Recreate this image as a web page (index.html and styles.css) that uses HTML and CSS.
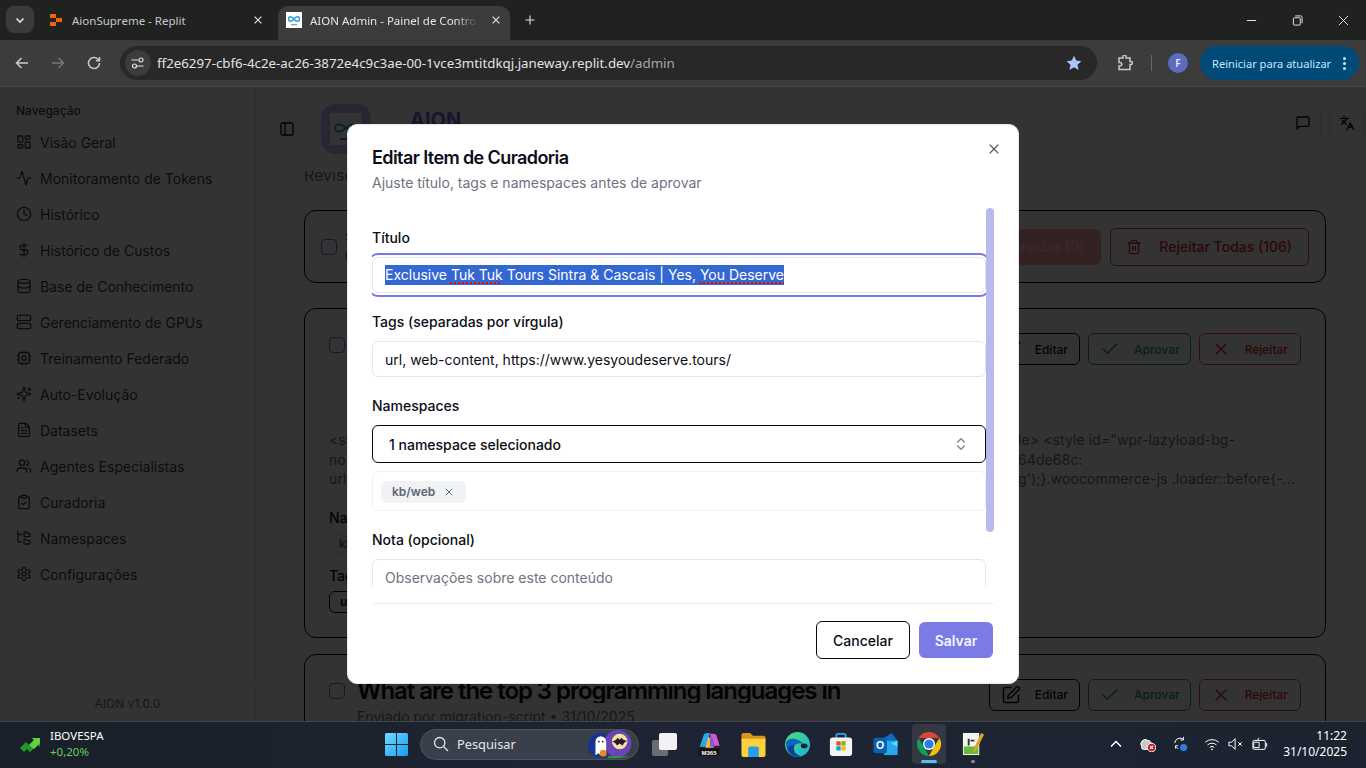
FILE: index.html
```html
<!DOCTYPE html>
<html lang="pt-BR">
<head>
<meta charset="utf-8">
<title>AION Admin - Painel de Controle</title>
<link rel="stylesheet" href="styles.css">
</head>
<body>
<svg class="sprite" xmlns="http://www.w3.org/2000/svg">
  <symbol id="i-dash" viewBox="0 0 24 24"><rect x="3" y="3" width="7" height="9" rx="1"/><rect x="14" y="3" width="7" height="5" rx="1"/><rect x="14" y="12" width="7" height="9" rx="1"/><rect x="3" y="16" width="7" height="5" rx="1"/></symbol>
  <symbol id="i-activity" viewBox="0 0 24 24"><path d="M22 12h-2.48a2 2 0 0 0-1.93 1.46l-2.35 8.36a.25.25 0 0 1-.48 0L9.24 2.18a.25.25 0 0 0-.48 0l-2.35 8.36A2 2 0 0 1 4.49 12H2"/></symbol>
  <symbol id="i-clock" viewBox="0 0 24 24"><circle cx="12" cy="12" r="10"/><path d="M12 6v6l4 2"/></symbol>
  <symbol id="i-dollar" viewBox="0 0 24 24"><path d="M12 2v20"/><path d="M17 5H9.5a3.5 3.5 0 0 0 0 7h5a3.5 3.5 0 0 1 0 7H6"/></symbol>
  <symbol id="i-db" viewBox="0 0 24 24"><ellipse cx="12" cy="5" rx="9" ry="3"/><path d="M3 5V19A9 3 0 0 0 21 19V5"/><path d="M3 12A9 3 0 0 0 21 12"/></symbol>
  <symbol id="i-server" viewBox="0 0 24 24"><rect x="2" y="2" width="20" height="8" rx="2"/><rect x="2" y="14" width="20" height="8" rx="2"/><path d="M6 6h.01"/><path d="M6 18h.01"/></symbol>
  <symbol id="i-cpu" viewBox="0 0 24 24"><rect x="4" y="4" width="16" height="16" rx="2"/><rect x="9" y="9" width="6" height="6" rx="1"/><path d="M15 2v2M15 20v2M2 15h2M2 9h2M20 15h2M20 9h2M9 2v2M9 20v2"/></symbol>
  <symbol id="i-spark" viewBox="0 0 24 24"><path d="M9.937 15.5A2 2 0 0 0 8.5 14.063l-6.135-1.582a.5.5 0 0 1 0-.962L8.5 9.936A2 2 0 0 0 9.937 8.5l1.582-6.135a.5.5 0 0 1 .963 0L14.063 8.5A2 2 0 0 0 15.5 9.937l6.135 1.581a.5.5 0 0 1 0 .964L15.5 14.063a2 2 0 0 0-1.437 1.437l-1.582 6.135a.5.5 0 0 1-.963 0z"/><path d="M20 3v4M22 5h-4M4 17v2M5 18H3"/></symbol>
  <symbol id="i-file" viewBox="0 0 24 24"><path d="M15 2H6a2 2 0 0 0-2 2v16a2 2 0 0 0 2 2h12a2 2 0 0 0 2-2V7Z"/><path d="M14 2v4a2 2 0 0 0 2 2h4"/><path d="M10 9H8M16 13H8M16 17H8"/></symbol>
  <symbol id="i-users" viewBox="0 0 24 24"><path d="M16 21v-2a4 4 0 0 0-4-4H6a4 4 0 0 0-4 4v2"/><circle cx="9" cy="7" r="4"/><path d="M22 21v-2a4 4 0 0 0-3-3.87"/><path d="M16 3.13a4 4 0 0 1 0 7.75"/></symbol>
  <symbol id="i-clip" viewBox="0 0 24 24"><rect x="8" y="2" width="8" height="4" rx="1"/><path d="M16 4h2a2 2 0 0 1 2 2v14a2 2 0 0 1-2 2H6a2 2 0 0 1-2-2V6a2 2 0 0 1 2-2h2"/><path d="m9 14 2 2 4-4"/></symbol>
  <symbol id="i-tree" viewBox="0 0 24 24"><path d="M20 10a1 1 0 0 0 1-1V6a1 1 0 0 0-1-1h-2.5a1 1 0 0 1-.8-.4l-.9-1.2A1 1 0 0 0 15 3h-2a1 1 0 0 0-1 1v5a1 1 0 0 0 1 1Z"/><path d="M20 21a1 1 0 0 0 1-1v-3a1 1 0 0 0-1-1h-2.9a1 1 0 0 1-.88-.55l-.42-.85a1 1 0 0 0-.92-.6H13a1 1 0 0 0-1 1v5a1 1 0 0 0 1 1Z"/><path d="M3 5a2 2 0 0 0 2 2h3"/><path d="M3 3v13a2 2 0 0 0 2 2h3"/></symbol>
  <symbol id="i-gear" viewBox="0 0 24 24"><path d="M12.22 2h-.44a2 2 0 0 0-2 2v.18a2 2 0 0 1-1 1.73l-.43.25a2 2 0 0 1-2 0l-.15-.08a2 2 0 0 0-2.73.73l-.22.38a2 2 0 0 0 .73 2.73l.15.1a2 2 0 0 1 1 1.72v.51a2 2 0 0 1-1 1.74l-.15.09a2 2 0 0 0-.73 2.73l.22.38a2 2 0 0 0 2.73.73l.15-.08a2 2 0 0 1 2 0l.43.25a2 2 0 0 1 1 1.73V20a2 2 0 0 0 2 2h.44a2 2 0 0 0 2-2v-.18a2 2 0 0 1 1-1.73l.43-.25a2 2 0 0 1 2 0l.15.08a2 2 0 0 0 2.73-.73l.22-.39a2 2 0 0 0-.73-2.73l-.15-.08a2 2 0 0 1-1-1.74v-.5a2 2 0 0 1 1-1.74l.15-.09a2 2 0 0 0 .73-2.73l-.22-.38a2 2 0 0 0-2.73-.73l-.15.08a2 2 0 0 1-2 0l-.43-.25a2 2 0 0 1-1-1.73V4a2 2 0 0 0-2-2z"/><circle cx="12" cy="12" r="3"/></symbol>
  <symbol id="i-panel" viewBox="0 0 24 24"><rect x="3" y="3" width="18" height="18" rx="2"/><path d="M9 3v18"/></symbol>
  <symbol id="i-msg" viewBox="0 0 24 24"><path d="M21 15a2 2 0 0 1-2 2H7l-4 4V5a2 2 0 0 1 2-2h14a2 2 0 0 1 2 2z"/></symbol>
  <symbol id="i-lang" viewBox="0 0 24 24"><path d="m5 8 6 6M4 14l6-6 2-3M2 5h12M7 2h1M22 22l-5-10-5 10M14 18h6"/></symbol>
  <symbol id="i-trash" viewBox="0 0 24 24"><path d="M3 6h18"/><path d="M19 6v14c0 1-1 2-2 2H7c-1 0-2-1-2-2V6"/><path d="M8 6V4c0-1 1-2 2-2h4c1 0 2 1 2 2v2"/><path d="M10 11v6M14 11v6"/></symbol>
  <symbol id="i-check" viewBox="0 0 24 24"><path d="M20 6 9 17l-5-5"/></symbol>
  <symbol id="i-x" viewBox="0 0 24 24"><path d="M18 6 6 18"/><path d="m6 6 12 12"/></symbol>
  <symbol id="i-pen" viewBox="0 0 24 24"><path d="M12 3H5a2 2 0 0 0-2 2v14a2 2 0 0 0 2 2h14a2 2 0 0 0 2-2v-7"/><path d="M18.375 2.625a1 1 0 0 1 3 3l-9.013 9.014a2 2 0 0 1-.853.505l-2.873.84a.5.5 0 0 1-.62-.62l.84-2.873a2 2 0 0 1 .506-.852z"/></symbol>
  <symbol id="i-updown" viewBox="0 0 24 24"><path d="m7 15 5 5 5-5"/><path d="m7 9 5-5 5 5"/></symbol>
</svg>

<header class="tabstrip">
  <button class="tab-menu"><svg class="ci" viewBox="0 0 16 16"><path d="m4.5 6.5 3.5 3.5 3.5-3.5"/></svg></button>
  <div class="tab">
    <svg class="favicon" viewBox="0 0 16 16"><path fill="#f26207" d="M2 2h6v4H2zM8 6h6v4H8zM2 10h6v4H2z"/></svg>
    <span class="tab-title">AionSupreme - Replit</span>
    <svg class="tab-close" viewBox="0 0 16 16"><path d="m3.5 3.5 9 9M12.500 3.500l-9 9"/></svg>
  </div>
  <div class="tab tab-active">
    <svg class="favicon" viewBox="0 0 16 16"><rect width="16" height="16" fill="#fff"/><path fill="none" stroke="#2d9fd8" stroke-width="1.400" d="M2.500 7c0-3 3.500-3 5.500 0s5.500 3 5.500 0-3.500-3-5.500 0-5.500 3-5.500 0z"/><rect x="5" y="12" width="6" height="1.300" fill="#999"/></svg>
    <span class="tab-title tab-fade">AION Admin - Painel de Controle</span>
    <svg class="tab-close" viewBox="0 0 16 16"><path d="m3.500 3.500 9 9M12.500 3.500l-9 9"/></svg>
  </div>
  <svg class="tab-new" viewBox="0 0 16 16"><path d="M8 2v12M2 8h12"/></svg>
  <div class="win-controls">
    <div class="win-btn"><svg viewBox="0 0 12 12"><path d="M1 6h10"/></svg></div>
    <div class="win-btn"><svg viewBox="0 0 12 12"><rect x="1.500" y="3" width="7.500" height="8" rx="1"/><path d="M3.500 1h6a1.500 1.500 0 0 1 1.500 1.500V9"/></svg></div>
    <div class="win-btn"><svg viewBox="0 0 12 12"><path d="m1 1 10 10M11 1 1 11"/></svg></div>
  </div>
</header>

<nav class="toolbar">
  <svg class="tool-ic" viewBox="0 0 16 16"><path d="M14 8H2.500M7.500 3l-5 5 5 5"/></svg>
  <svg class="tool-ic tool-off" viewBox="0 0 16 16"><path d="M2 8h11.500M8.500 3l5 5-5 5"/></svg>
  <svg class="tool-ic" viewBox="0 0 16 16"><path d="M13.500 8a5.500 5.500 0 1 1-1.700-4L13.500 5.700M13.500 2v3.700H9.800"/></svg>
  <div class="omnibox">
    <div class="site-btn"><svg viewBox="0 0 16 16"><path d="M1.500 5h7M13.500 11h-7"/><circle cx="11" cy="5" r="2"/><circle cx="4.500" cy="11" r="2"/></svg></div>
    <span class="url">ff2e6297-cbf6-4c2e-ac26-3872e4c9c3ae-00-1vce3mtitdkqj.janeway.replit.dev<span class="url-path">/admin</span></span>
    <svg class="star" viewBox="0 0 16 16"><path d="m8 .8 2.200 4.800 5.200.6-3.900 3.500 1.100 5.200L8 12.300l-4.600 2.600 1.100-5.200L.6 6.200l5.200-.6z"/></svg>
  </div>
  <svg class="ext" viewBox="0 0 16 16"><path d="M6 1.500a1.500 1.500 0 0 1 3 0V3h4v3.500h1a1.500 1.500 0 0 1 0 3h-1V14.500H2V11h1a1.700 1.700 0 0 0 0-3.500H2V3h4z"/></svg>
  <span class="tool-sep"></span>
  <span class="avatar">F</span>
  <div class="update">Reiniciar para atualizar<span class="update-dots"><i></i><i></i><i></i></span></div>
</nav>

<div class="stage">
  <aside class="sidebar">
    <div class="side-nav">
      <div class="side-label">Navegação</div>
      <a class="side-item"><svg class="i"><use href="#i-dash"/></svg>Visão Geral</a>
      <a class="side-item"><svg class="i"><use href="#i-activity"/></svg>Monitoramento de Tokens</a>
      <a class="side-item"><svg class="i"><use href="#i-clock"/></svg>Histórico</a>
      <a class="side-item"><svg class="i"><use href="#i-dollar"/></svg>Histórico de Custos</a>
      <a class="side-item"><svg class="i"><use href="#i-db"/></svg>Base de Conhecimento</a>
      <a class="side-item"><svg class="i"><use href="#i-server"/></svg>Gerenciamento de GPUs</a>
      <a class="side-item"><svg class="i"><use href="#i-cpu"/></svg>Treinamento Federado</a>
      <a class="side-item"><svg class="i"><use href="#i-spark"/></svg>Auto-Evolução</a>
      <a class="side-item"><svg class="i"><use href="#i-file"/></svg>Datasets</a>
      <a class="side-item"><svg class="i"><use href="#i-users"/></svg>Agentes Especialistas</a>
      <a class="side-item"><svg class="i"><use href="#i-clip"/></svg>Curadoria</a>
      <a class="side-item"><svg class="i"><use href="#i-tree"/></svg>Namespaces</a>
      <a class="side-item"><svg class="i"><use href="#i-gear"/></svg>Configurações</a>
    </div>
    <div class="side-foot">AION v1.0.0</div>
  </aside>

  <main class="main">
    <div class="topbar">
      <svg class="i topbar-toggle"><use href="#i-panel"/></svg>
      <div class="logo-box">
        <div class="logo-img">
          <svg viewBox="0 0 32 32"><path fill="none" stroke="#1f8fd0" stroke-width="1.600" d="M5 15c0-5 6-5 11 0s11 5 11 0-6-5-11 0-11 5-11 0z"/><rect x="10" y="25" width="12" height="2" fill="#777"/></svg>
        </div>
      </div>
      <h1 class="brand">AION</h1>
      <div class="top-actions">
        <div class="icon-btn"><svg class="i"><use href="#i-msg"/></svg></div>
        <div class="icon-btn"><svg class="i"><use href="#i-lang"/></svg></div>
      </div>
    </div>
    <div class="content">
      <p class="page-sub">Revise e aprove o conteúdo</p>
      <section class="card bulk">
        <span class="checkbox"></span>
        <div class="bulk-note">Selecionar<br>todas</div>
        <div class="btn-lg btn-red-solid">Rejeitar Selecionadas (0)</div>
        <div class="btn-lg btn-red"><svg class="i"><use href="#i-trash"/></svg>Rejeitar Todas (106)</div>
      </section>

      <section class="card item">
        <div class="item-head item-head-tall">
          <span class="checkbox"></span>
          <div class="item-main"><h2 class="item-title">Exclusive Tuk Tuk Tours</h2></div>
          <div class="item-actions">
            <div class="btn-sm"><svg class="i"><use href="#i-pen"/></svg>Editar</div>
            <div class="btn-sm btn-green"><svg class="i"><use href="#i-check"/></svg>Aprovar</div>
            <div class="btn-sm btn-redline"><svg class="i"><use href="#i-x"/></svg>Rejeitar</div>
          </div>
        </div>
        <div class="preview">
          <div class="preview-line"><span class="preview-left">&lt;style</span><span>le&gt; &lt;style id="wpr-lazyload-bg-</span></div>
          <div class="preview-line"><span class="preview-left">no</span><span>64de68c:</span></div>
          <div class="preview-line"><span class="preview-left">url</span><span>g');}.woocommerce-js .loader::before{-...</span></div>
        </div>
        <div class="meta-label">Namespaces:</div>
        <span class="soft-chip">kb/web</span>
        <div class="meta-label meta-label-tight">Tags:</div>
        <span class="line-chip">url</span>
      </section>

      <section class="card item">
        <div class="item-head">
          <span class="checkbox"></span>
          <div class="item-main">
            <h2 class="item-title">What are the top 3 programming languages in</h2>
            <p class="item-by">Enviado por migration-script • 31/10/2025</p>
          </div>
          <div class="item-actions">
            <div class="btn-sm"><svg class="i"><use href="#i-pen"/></svg>Editar</div>
            <div class="btn-sm btn-green"><svg class="i"><use href="#i-check"/></svg>Aprovar</div>
            <div class="btn-sm btn-redline"><svg class="i"><use href="#i-x"/></svg>Rejeitar</div>
          </div>
        </div>
      </section>
    </div>
  </main>

  <div class="overlay">
    <div class="dialog">
      <svg class="i dialog-close"><use href="#i-x"/></svg>
      <h2 class="dialog-title">Editar Item de Curadoria</h2>
      <p class="dialog-desc">Ajuste título, tags e namespaces antes de aprovar</p>
      <div class="dialog-scroll">
        <div class="scroll-view">
          <div class="field">
            <label class="field-label">Título</label>
            <div class="input input-focus"><span class="selected">Exclusive <span class="typo">Tuk Tuk</span> Tours Sintra &amp; Cascais | Yes, <span class="typo">You Deserve</span></span></div>
          </div>
          <div class="field">
            <label class="field-label">Tags (separadas por vírgula)</label>
            <input class="input" value="url, web-content, https://www.yesyoudeserve.tours/">
          </div>
          <div class="field">
            <label class="field-label">Namespaces</label>
            <div class="select">1 namespace selecionado<svg class="i select-ic"><use href="#i-updown"/></svg></div>
            <div class="chipbox"><span class="chip">kb/web<svg class="i chip-x"><use href="#i-x"/></svg></span></div>
          </div>
          <div class="field">
            <label class="field-label">Nota (opcional)</label>
            <textarea class="input textarea" placeholder="Observações sobre este conteúdo"></textarea>
          </div>
        </div>
        <div class="scroll-track"><div class="scroll-thumb"></div></div>
      </div>
      <div class="dialog-foot">
        <div class="btn-cancel">Cancelar</div>
        <div class="btn-save">Salvar</div>
      </div>
    </div>
  </div>
</div>

<footer class="taskbar">
  <div class="ticker">
    <svg class="ticker-ic" viewBox="0 0 22 16"><path fill="#1f9a2c" d="M0 12 6 6l3 3 5-5-2-2h8v9l-2-2-8 7-3-3-3 3z"/><path fill="#67d13b" d="M9 9l5-5-2-2h8v5l-6 6z"/></svg>
    <div class="ticker-text"><span class="ticker-name">IBOVESPA</span><span class="ticker-val">+0,20%</span></div>
  </div>
  <div class="tb-cell tb-start">
    <svg viewBox="0 0 23 23" class="tb-ic-23"><defs><linearGradient id="w1" x1="0" y1="0" x2="1" y2="1"><stop offset="0" stop-color="#6fdcff"/><stop offset="1" stop-color="#1a9af0"/></linearGradient></defs><path fill="url(#w1)" d="M0 1.500A1.500 1.500 0 0 1 1.500 0H11v11H0zM12 0h9.500A1.500 1.500 0 0 1 23 1.500V11H12zM0 12h11v11H1.500A1.500 1.500 0 0 1 0 21.500zM12 12h11v9.500a1.500 1.500 0 0 1-1.500 1.500H12z"/></svg>
  </div>
  <div class="tb-search">
    <svg class="tb-search-ic" viewBox="0 0 16 16"><circle cx="6.700" cy="6.700" r="5.200"/><path d="m10.500 10.500 4.500 4.500"/></svg>
    <span class="tb-search-text">Pesquisar</span>
    <svg class="tb-search-art" viewBox="0 0 48 32"><ellipse cx="14" cy="17" rx="13" ry="13" fill="#19348f"/><circle cx="32" cy="15" r="14" fill="#6b45b8"/><circle cx="34" cy="13" r="8" fill="#f5e3a0"/><path fill="#23182f" d="M26 13c3-1 5-2 6-4l2 2 2-2c1 2 3 3 6 3-3 1-4 3-5 5l-3-2-3 2c-1-2-2-3-5-4z"/><path fill="#fff" d="M9 27V13a5.500 5.500 0 0 1 11 0v14l-3-2-2.500 2-2.500-2z"/><circle cx="12.500" cy="13" r="1" fill="#222"/><circle cx="16.500" cy="13" r="1" fill="#222"/><circle cx="17" cy="25" r="3.500" fill="#f08a1d"/><path fill="#2c9c4a" d="M22 28h22a22 6 0 0 1-22 2z"/></svg>
  </div>
  <div class="tb-cell">
    <svg viewBox="0 0 26 24" class="tb-ic-26"><rect x="0" y="8" width="16" height="16" rx="2" fill="#6b6d70"/><rect x="7" y="1" width="18" height="17" rx="2" fill="#f2f2f2"/></svg>
  </div>
  <div class="tb-cell">
    <svg viewBox="0 0 24 26" class="tb-ic-24"><path fill="#2aa7e8" d="M2 16 6 4c.600-2 2-3 4-3h3L9 16z"/><path fill="#f6b73c" d="M8 17 11 6h3l3 11z"/><path fill="#d357c6" d="M13 2h4c2 0 3 1 3.500 3l3 10h-8z"/><path fill="#7a5be0" d="M13 5c2 0 3 2 3.500 4L18 16h-5z"/><rect x="1" y="18" width="22" height="8" rx="1" fill="#111"/><text x="12" y="24.800" class="tb-m365">M365</text></svg>
  </div>
  <div class="tb-cell">
    <svg viewBox="0 0 25 26" class="tb-ic-25"><path fill="#d9971e" d="M0 3a2 2 0 0 1 2-2h7l3 3h11a2 2 0 0 1 2 2v3H0z"/><path fill="#fbd13e" d="M0 7h25v17a2 2 0 0 1-2 2H2a2 2 0 0 1-2-2z"/><path fill="#2a9de8" d="M7 17a2 2 0 0 1 2-2h7a2 2 0 0 1 2 2v9H7z"/></svg>
  </div>
  <div class="tb-cell">
    <svg viewBox="0 0 26 26" class="tb-ic-25"><defs><linearGradient id="e1" x1="0" y1="0" x2="1" y2="1"><stop offset="0" stop-color="#4be07a"/><stop offset="1" stop-color="#1ab0d8"/></linearGradient></defs><circle cx="13" cy="13" r="13" fill="url(#e1)"/><path fill="#0b63c4" d="M1 11C1 25 12 28 18 25 9 25 7 18 10 14c2-3 7-3 9-1-2-6-16-9-18-2z"/><path fill="#0b3f96" d="M10 14c-2 4 0 10 7 11-8 2-13-3-14-8 1-2 4-4 7-3z"/><ellipse cx="20" cy="14.500" rx="3.500" ry="2.500" fill="#1c2230"/></svg>
  </div>
  <div class="tb-cell">
    <svg viewBox="0 0 24 26" class="tb-ic-24"><path d="M7 7V4a2 2 0 0 1 2-2h6a2 2 0 0 1 2 2v3" fill="none" stroke="#28a8ea" stroke-width="2"/><rect y="6" width="24" height="20" rx="3" fill="#f4f4f4"/><rect x="7" y="10" width="4.600" height="4.600" fill="#f25022"/><rect x="12.400" y="10" width="4.600" height="4.600" fill="#7fba00"/><rect x="7" y="15.400" width="4.600" height="4.600" fill="#00a4ef"/><rect x="12.400" y="15.400" width="4.600" height="4.600" fill="#ffb900"/></svg>
  </div>
  <div class="tb-cell">
    <svg viewBox="0 0 25 26" class="tb-ic-25"><path fill="#0f6cbd" d="m11 6 8-5 6 8v13a2 2 0 0 1-2 2H11z"/><path fill="#28a8ea" d="M11 9h14v15H11z"/><path fill="#50d9ff" d="M25 9v6l-7-3z"/><rect y="6" width="14" height="16" rx="2" fill="#0a5fb0"/><text x="7" y="18" class="tb-o">O</text></svg>
  </div>
  <div class="tb-cell tb-open">
    <svg viewBox="0 0 24 24" class="tb-ic-24"><path fill="#db4437" d="M1.600 6A12 12 0 0 1 22.400 6H12z"/><path fill="#f4c20d" d="M22.400 6A12 12 0 0 1 12 24l5-9z"/><path fill="#0f9d58" d="M12 24A12 12 0 0 1 1.600 6L7 15z"/><circle cx="12" cy="12" r="6" fill="#fff"/><circle cx="12" cy="12" r="4.600" fill="#2a7de1"/></svg>
    <span class="tb-bar"></span>
  </div>
  <div class="tb-cell">
    <svg viewBox="1 2 23 25" class="tb-ic-24"><path fill="#f5f5ef" d="M2 3h17v23H2z"/><path fill="#66b93c" d="M3 17h15v8H3z"/><path fill="#333" d="M7 9h2v7H7zM10 10h4v2h-4z"/><path fill="#e0a526" d="m13 20 8-17 3 1.500L16 21l-3 2z"/></svg>
    <span class="tb-dot"></span>
  </div>
  <div class="tray">
    <svg class="tray-chev" viewBox="0 0 12 8"><path d="m1 6.500 5-5 5 5"/></svg>
    <svg class="tray-ic tray-cloud" viewBox="0 0 18 18"><path fill="#c8c8c8" d="M2 12a5 5 0 0 1 7-7c2 0 4 2 4 5l-3 5H4a2 2 0 0 1-2-3z"/><circle cx="13" cy="13" r="4.800" fill="#c4202c"/><path d="m11.400 11.400 3.200 3.200M14.600 11.400l-3.200 3.200" stroke="#fff" stroke-width="1.200"/></svg>
    <svg class="tray-ic tray-sync" viewBox="0 0 18 18"><path d="M3 8a6 6 0 0 1 10-4M13 1v3.500H9.500M4 14v-3h3M4 12c1 1 2 2 3 2"/><circle cx="13" cy="13" r="4" fill="#2b7fe0" stroke="none"/></svg>
    <svg class="tray-ic tray-wifi" viewBox="0 0 18 18"><path d="M1.500 7a11 11 0 0 1 15 0M4 10a7.500 7.500 0 0 1 10 0M6.500 12.800a3.500 3.500 0 0 1 5 0"/><circle cx="9" cy="15" r="1" fill="#fff" stroke="none"/></svg>
    <svg class="tray-ic tray-vol" viewBox="0 0 18 18"><path d="M1 7v4h3l4 4V3L4 7zM11.500 7l4 4M15.500 7l-4 4"/></svg>
    <svg class="tray-ic tray-bat" viewBox="0 0 18 18"><rect x="1" y="5" width="14" height="10" rx="1.500"/><path d="M16.500 8v4M6 5l2-3M2 7h6v6H2z"/></svg>
    <div class="clock"><span>11:22</span><span>31/10/2025</span></div>
  </div>
</footer>
</body>
</html>
```

FILE: styles.css
```css
* { box-sizing: border-box; }
html, body { margin: 0; padding: 0; }
body {
  width: 1366px;
  height: 768px;
  overflow: hidden;
  display: flex;
  flex-direction: column;
  font-family: "Inter", "Liberation Sans", sans-serif;
  background: #fff;
  color: #0b0d17;
}
.sprite { width: 0; height: 0; position: absolute; }
h1, h2, p { margin: 0; }
.i {
  width: 16px;
  height: 16px;
  flex: none;
  fill: none;
  stroke: currentColor;
  stroke-width: 2;
  stroke-linecap: round;
  stroke-linejoin: round;
}

/* browser chrome */
.tabstrip {
  height: 40px;
  flex: none;
  display: flex;
  background: #202221;
  font-family: "Noto Sans", "Open Sans", sans-serif;
  font-size: 11.500px;
  color: #c7c7c7;
  padding-left: 6px;
}
.tab-menu {
  width: 28px;
  height: 27px;
  margin-top: 6px;
  padding: 0;
  border: 0;
  border-radius: 8px;
  background: #3b3b3b;
  display: flex;
  align-items: center;
  justify-content: center;
}
.ci { width: 16px; height: 16px; fill: none; stroke: #e3e3e3; stroke-width: 1.6; }
.tab {
  width: 232px;
  height: 34px;
  margin-top: 6px;
  margin-left: 6px;
  padding: 0 8px 6px;
  display: flex;
  align-items: center;
  border-radius: 10px 10px 0 0;
}
.tab-active { background: #3c3c3c; color: #e6e6e6; }
.favicon { width: 16px; height: 16px; flex: none; }
.tab-title { margin-left: 8px; width: 176px; white-space: nowrap; overflow: hidden; }
.tab-fade { -webkit-mask-image: linear-gradient(90deg, #000 145px, transparent 168px); mask-image: linear-gradient(90deg, #000 145px, transparent 168px); }
.tab-close { width: 12px; height: 12px; flex: none; margin-left: 10px; fill: none; stroke: #dcdcdc; stroke-width: 1.700; }
.tab-new { width: 12px; height: 12px; margin: 14px 0 0 14px; fill: none; stroke: #e3e3e3; stroke-width: 1.500; }
.win-controls { margin-left: auto; display: flex; }
.win-btn { width: 46px; height: 40px; display: flex; align-items: center; justify-content: center; }
.win-btn svg { width: 11px; height: 11px; fill: none; stroke: #f0f0f0; stroke-width: 1; }

.toolbar {
  height: 47px;
  flex: none;
  display: flex;
  align-items: center;
  background: #3c3c3c;
  border-bottom: 1px solid #4a4a4a;
  font-family: "Noto Sans", "Open Sans", sans-serif;
}
.tool-ic { width: 16px; height: 16px; flex: none; margin-left: 20px; fill: none; stroke: #c7c7c7; stroke-width: 1.600; }
.tool-ic:first-child { margin-left: 14px; }
.tool-off { stroke: #757575; }
.omnibox {
  width: 977px;
  height: 34px;
  margin-left: 18px;
  display: flex;
  align-items: center;
  background: #282828;
  border-radius: 17px;
  padding: 0 15px 0 5px;
}
.site-btn {
  width: 26px;
  height: 26px;
  border-radius: 50%;
  background: #3c3c3c;
  display: flex;
  align-items: center;
  justify-content: center;
}
.site-btn svg { width: 16px; height: 16px; fill: none; stroke: #e3e3e3; stroke-width: 1.200; }
.url { margin-left: 6px; font-size: 13.300px; color: #e3e3e3; white-space: nowrap; }
.url-path { color: #a6a6a6; }
.star { width: 16px; height: 16px; margin-left: auto; fill: #a8c7fa; }
.ext { width: 16px; height: 16px; margin-left: 20px; fill: none; stroke: #c7c7c7; stroke-width: 1.500; }
.tool-sep { width: 1px; height: 16px; margin-left: 18px; background: #666; }
.avatar {
  width: 20px;
  height: 20px;
  margin-left: 16px;
  border-radius: 50%;
  background: #5c6bc0;
  color: #e6e8ff;
  font-size: 10px;
  font-weight: 600;
  display: flex;
  align-items: center;
  justify-content: center;
}
.update {
  width: 159px;
  height: 34px;
  margin-left: 12px;
  padding-left: 12px;
  border-radius: 17px;
  background: #004a77;
  color: #c2e7ff;
  font-size: 11.100px;
  display: flex;
  align-items: center;
  white-space: nowrap;
}
.update-dots { margin-left: auto; margin-right: 13px; display: flex; flex-direction: column; gap: 2px; }
.update-dots i { width: 3px; height: 3px; border-radius: 50%; background: #c2e7ff; display: block; }

/* page under the modal */
.stage {
  flex: 1;
  min-height: 0;
  position: relative;
  display: flex;
  background: #fff;
}
.sidebar {
  width: 256px;
  flex: none;
  display: flex;
  flex-direction: column;
  background: #fff;
  border-right: 1px solid #ececf0;
  color: #3f3f46;
}
.side-nav { flex: 1; padding: 14px 0 0 16px; }
.side-label { height: 20px; line-height: 20px; font-size: 12px; font-weight: 500; margin-bottom: 3px; }
.side-item {
  height: 36px;
  display: flex;
  align-items: center;
  gap: 8px;
  font-size: 14px;
}
.side-foot {
  height: 34px;
  border-top: 1px solid #ececf0;
  text-align: center;
  line-height: 32px;
  font-size: 12px;
  color: #71717f;
}
.main { flex: 1; min-width: 0; display: flex; flex-direction: column; }
.topbar {
  height: 84px;
  flex: none;
  display: flex;
  align-items: center;
  padding: 0 1px 0 23px;
  background: #fff;
  position: relative;
  z-index: 1;
}
.logo-box {
  width: 50px;
  height: 50px;
  margin-left: 26px;
  border-radius: 14px;
  background: #c4c4ff;
  display: flex;
  align-items: center;
  justify-content: center;
}
.logo-img { width: 32px; height: 32px; background: #fff; }
.logo-img svg { display: block; width: 32px; height: 32px; }
.brand { margin: -18px 0 0 39px; font-size: 20px; font-weight: 700; color: #6a6ae0; }
.top-actions { margin-left: auto; display: flex; gap: 8px; margin-top: -12px; }
.icon-btn {
  width: 36px;
  height: 36px;
  border: 1px solid #e6e6f0;
  border-radius: 6px;
  display: flex;
  align-items: center;
  justify-content: center;
  color: #0b0d17;
}
.content { flex: 1; min-height: 0; overflow: hidden; padding: 0 40px 0 48px; }
.page-sub { margin-top: -8px; height: 24px; line-height: 24px; font-size: 16px; color: #71717f; }
.card { border: 1px solid #09090b; border-radius: 12px; background: #fff; }
.checkbox { width: 16px; height: 16px; flex: none; border: 1px solid #7070e0; border-radius: 4px; }
.bulk {
  margin-top: 23px;
  height: 73px;
  padding: 0 16px;
  display: flex;
  align-items: center;
}
.bulk-note { margin-left: 8px; font-size: 12px; color: #b91c1c; line-height: 20px; }
.btn-lg {
  height: 38px;
  display: flex;
  align-items: center;
  gap: 17px;
  font-size: 14px;
  font-weight: 500;
  border-radius: 6px;
  padding: 0 16px 0 15px;
}
.btn-red-solid { margin-left: auto; background: #ffaaa4; color: #ffdcd8; height: 36px; padding: 0 17px; }
.btn-red { margin-left: 9px; border: 1px solid #ef4444; color: #dc2626; }
.item { margin-top: 25px; padding: 24px; }
.item:last-child { margin-top: 16px; }
.item-head { display: flex; align-items: flex-start; }
.item-head-tall { height: 85px; }
.item-head .checkbox { margin-top: 4px; }
.item-main { flex: 1; min-width: 0; margin-left: 12px; }
.item-title { font-size: 24px; line-height: 24px; font-weight: 600; letter-spacing: -0.044em; white-space: nowrap; overflow: hidden; }
.item-by { margin-top: 4px; font-size: 14px; line-height: 20px; color: #71717f; }
.item-actions { display: flex; gap: 8px; }
.btn-sm {
  height: 32px;
  padding: 0 11px;
  border: 1px solid #09090b;
  border-radius: 6px;
  display: flex;
  align-items: center;
  gap: 14px;
  font-size: 12px;
  font-weight: 500;
  color: #0b0d17;
}
.btn-sm .i { width: 20px; height: 20px; stroke-width: 1.800; }
.btn-green { border-color: #22a355; color: #16a34a; padding-right: 10px; }
.btn-redline { border-color: #ef4444; color: #dc2626; padding-right: 12px; }
.preview { margin-top: 12px; font-size: 14px; line-height: 19.500px; letter-spacing: 0.1px; color: #71717f; }
.preview-line { display: flex; white-space: nowrap; }
.preview-left { width: 689px; flex: none; }
.meta-label { margin-top: 19px; font-size: 14px; font-weight: 500; line-height: 20px; }
.meta-label-tight { margin-top: 11px; }
.soft-chip, .line-chip {
  display: block;
  width: max-content;
  height: 22px;
  margin-top: 5px;
  padding: 0 10px;
  border-radius: 6px;
  font-size: 12px;
  font-weight: 600;
  line-height: 22px;
}
.soft-chip { background: #f1f2f5; color: #5f6672; }
.line-chip { border: 1px solid #09090b; line-height: 20px; }

/* modal */
.overlay { position: absolute; inset: 0; background: rgba(0, 0, 0, 0.8); z-index: 5; }
.dialog {
  position: absolute;
  left: 347px;
  top: 37px;
  width: 672px;
  padding: 24px;
  display: flex;
  flex-direction: column;
  background: #fff;
  border: 1px solid #e6e6ec;
  border-radius: 10px;
}
.dialog-close { position: absolute; top: 16px; right: 16px; color: #55555f; stroke-width: 1.600; }
.dialog-title { font-size: 18px; line-height: 18px; font-weight: 600; letter-spacing: -0.033em; }
.dialog-desc { margin-top: 6px; font-size: 14px; line-height: 20px; color: #71717f; }
.dialog-scroll {
  margin-top: 15px;
  height: 379px;
  flex: none;
  display: flex;
}
.scroll-view { flex: 1; min-width: 0; overflow: hidden; padding: 20px 0 12px; }
.scroll-track { width: 8px; flex: none; }
.scroll-thumb { height: 324px; background: #b9b9ee; border-radius: 4px; }
.field { margin-bottom: 19px; }
.field:last-child { margin-bottom: 0; }
.field-label { display: block; font-size: 14px; line-height: 20px; font-weight: 500; margin-bottom: 9px; }
.input {
  display: block;
  width: 100%;
  height: 36px;
  padding: 0 12px;
  border: 1px solid #e6e6ee;
  border-radius: 6px;
  background: #fff;
  font: 14px/20px "Inter", "Liberation Sans", sans-serif;
  color: #0b0d17;
  outline: none;
}
.input-focus {
  display: flex;
  align-items: center;
  white-space: nowrap;
  box-shadow: 0 0 0 2px #fff, 0 0 0 4px #7a7ae6;
}
.selected { background: #3367d1; color: #fff; }
.typo { text-decoration: underline dotted #f00 1.500px; text-underline-offset: 2px; }
.textarea { height: 80px; padding: 8px 12px; resize: none; }
.textarea::placeholder { color: #71717f; opacity: 1; }
.select {
  height: 38px;
  padding: 0 16px;
  display: flex;
  align-items: center;
  justify-content: space-between;
  border: 1px solid #09090b;
  border-radius: 6px;
  font-size: 14px;
  font-weight: 500;
}
.select-ic { opacity: 0.5; }
.chipbox {
  margin-top: 8px;
  height: 40px;
  padding: 8px;
  border: 1px solid #f1f1f4;
  border-radius: 6px;
}
.chip {
  display: inline-flex;
  align-items: center;
  height: 22px;
  padding: 0 11px;
  gap: 8px;
  border-radius: 6px;
  background: #f1f2f5;
  color: #5f6672;
  font-size: 12px;
  font-weight: 600;
}
.chip-x { width: 12px; height: 12px; margin-left: 0; }
.dialog-foot {
  margin-top: 16px;
  padding-top: 17px;
  border-top: 1px solid #eeeef1;
  display: flex;
  justify-content: flex-end;
  align-items: center;
  gap: 9px;
  font-size: 14px;
  font-weight: 500;
}
.btn-cancel {
  height: 38px;
  width: 94px;
  border: 1px solid #09090b;
  border-radius: 6px;
  display: flex;
  align-items: center;
  justify-content: center;
}
.btn-save {
  height: 36px;
  width: 74px;
  margin-right: 1px;
  border-radius: 6px;
  background: #7b7be6;
  color: #f3f3ff;
  font-weight: 600;
  display: flex;
  align-items: center;
  justify-content: center;
}

/* windows taskbar */
.taskbar {
  height: 47px;
  flex: none;
  display: flex;
  align-items: center;
  padding-bottom: 2px;
  background: linear-gradient(90deg, #1a2029, #1e2433 50%, #1b2330);
  border-top: 1px solid #40444c;
  font-family: "Noto Sans", "Open Sans", sans-serif;
  color: #fff;
  position: relative;
  z-index: 6;
}
.ticker { width: 374px; flex: none; padding-left: 20px; display: flex; align-items: center; gap: 8px; }
.ticker-ic { width: 22px; height: 16px; }
.ticker-text { display: flex; flex-direction: column; font-size: 11.500px; line-height: 16px; }
.ticker-val { color: #6ccb5f; }
.tb-cell {
  width: 44px;
  height: 40px;
  flex: none;
  position: relative;
  display: flex;
  align-items: center;
  justify-content: center;
}
.tb-ic-23 { width: 23px; height: 23px; }
.tb-ic-24 { width: 24px; height: 24px; }
.tb-ic-25 { width: 25px; height: 25px; }
.tb-ic-26 { width: 26px; height: 24px; }
.tb-m365 { font: 700 6.500px "Liberation Sans", sans-serif; fill: #fff; text-anchor: middle; }
.tb-o { font: 700 11px "Liberation Sans", sans-serif; fill: #fff; text-anchor: middle; }
.tb-search {
  width: 219px;
  height: 31px;
  margin: 0 4px 0 2px;
  flex: none;
  display: flex;
  align-items: center;
  padding: 0 4px 0 12px;
  background: #3a404b;
  border: 1px solid #4c525c;
  border-radius: 16px;
  font-size: 12.800px;
  color: #e6e6e6;
}
.tb-search-ic { width: 16px; height: 16px; fill: none; stroke: #e6e6e6; stroke-width: 1.300; }
.tb-search-text { margin-left: 8px; }
.tb-search-art { width: 48px; height: 31px; margin-left: auto; }
.tb-open { background: #333842; border-radius: 4px; width: 34px; margin: 0 5px; }
.tb-bar { position: absolute; left: 9px; bottom: 1px; width: 16px; height: 3px; border-radius: 2px; background: #4fc3f7; }
.tb-dot { position: absolute; bottom: 1px; left: 20px; width: 4px; height: 3px; border-radius: 2px; background: #8a8f98; }
.tray { margin-left: auto; width: 272px; flex: none; display: flex; align-items: center; padding-right: 19px; }
.tray-chev { width: 12px; height: 8px; margin-left: 16px; fill: none; stroke: #fff; stroke-width: 1.500; }
.tray-ic { width: 16px; height: 16px; fill: none; stroke: #fff; stroke-width: 1.100; }
.tray-cloud { margin-left: 18px; }
.tray-sync { margin-left: 16px; }
.tray-wifi { margin-left: 16px; }
.tray-vol { margin-left: 8px; }
.tray-bat { margin-left: 8px; }
.clock { margin-left: auto; display: flex; flex-direction: column; align-items: flex-end; font-size: 12px; line-height: 16px; }
```
